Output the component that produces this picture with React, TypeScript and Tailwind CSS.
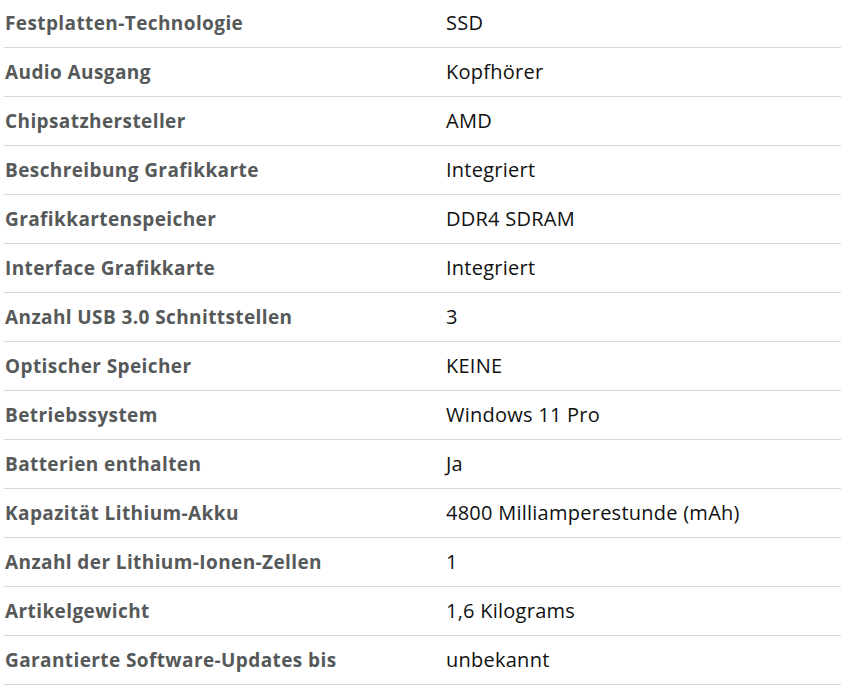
const rows: [string, string][] = [
  ["Festplatten-Technologie", "SSD"],
  ["Audio Ausgang", "Kopfhörer"],
  ["Chipsatzhersteller", "AMD"],
  ["Beschreibung Grafikkarte", "Integriert"],
  ["Grafikkartenspeicher", "DDR4 SDRAM"],
  ["Interface Grafikkarte", "Integriert"],
  ["Anzahl USB 3.0 Schnittstellen", "3"],
  ["Optischer Speicher", "KEINE"],
  ["Betriebssystem", "Windows 11 Pro"],
  ["Batterien enthalten", "Ja"],
  ["Kapazität Lithium-Akku", "4800 Milliamperestunde (mAh)"],
  ["Anzahl der Lithium-Ionen-Zellen", "1"],
  ["Artikelgewicht", "1,6 Kilograms"],
  ["Garantierte Software-Updates bis", "unbekannt"],
];

export default function App() {
  return (
    <div className="min-h-screen bg-white pl-1 font-['Open_Sans',sans-serif] overflow-hidden">
      <div className="-mt-px">
        {rows.map(([label, value]) => (
          <div
            key={label}
            className="grid grid-cols-[442px_1fr] items-center h-[49px] border-b border-[#d5d9d9]"
          >
            <div className="pl-px text-[19px] tracking-[0.4px] font-bold text-[#565959]">{label}</div>
            <div className="text-[20px] tracking-[0.25px] text-[#0f1111]">{value}</div>
          </div>
        ))}
      </div>
    </div>
  );
}
